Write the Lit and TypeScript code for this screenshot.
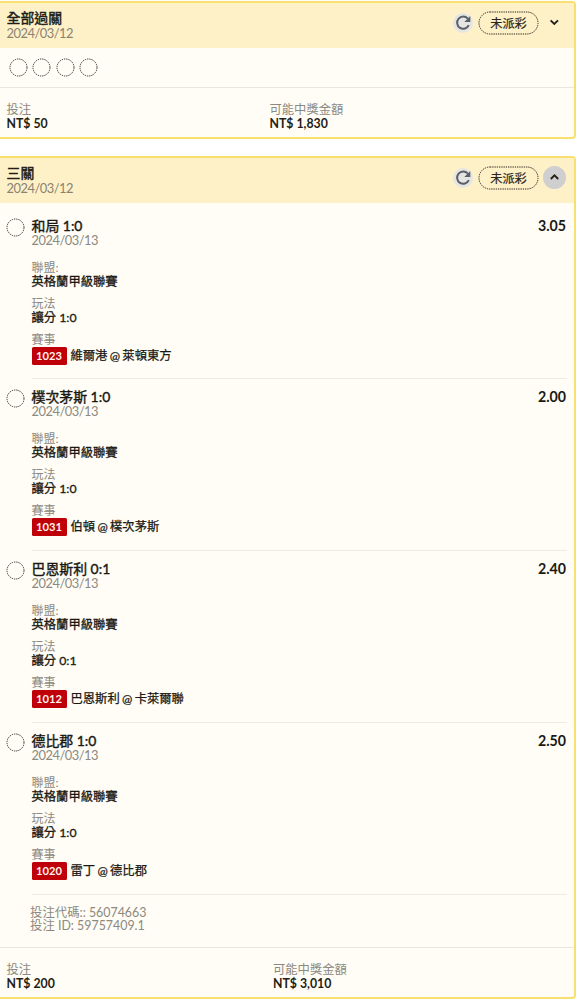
import { LitElement, html, css, svg } from "lit";
import { customElement, property } from "lit/decorators.js";

interface Leg {
  pick: string;
  odds: string;
  market: string;
  code: string;
  match: string;
}

const LEGS: Leg[] = [
  { pick: "和局 1:0", odds: "3.05", market: "讓分 1:0", code: "1023", match: "維爾港 @ 萊頓東方" },
  { pick: "樸次茅斯 1:0", odds: "2.00", market: "讓分 1:0", code: "1031", match: "伯頓 @ 樸次茅斯" },
  { pick: "巴恩斯利 0:1", odds: "2.40", market: "讓分 0:1", code: "1012", match: "巴恩斯利 @ 卡萊爾聯" },
  { pick: "德比郡 1:0", odds: "2.50", market: "讓分 1:0", code: "1020", match: "雷丁 @ 德比郡" },
];

const ring = html`<svg class="ring" width="19" height="19" viewBox="0 0 19 19">
  ${svg`<circle cx="9.5" cy="9.5" r="8.5" fill="none" stroke="#35332f" stroke-width="1" stroke-dasharray="1.35 0.9" />`}
</svg>`;

@customElement("bet-header")
class BetHeader extends LitElement {
  @property() heading = "";
  @property({ type: Boolean }) open = false;

  static styles = css`
    :host { display: flex; height: 44.5px; background: #fef1c8; }
    .titles { flex: 1; padding: 6.5px 0 0 6.5px; }
    .title { font-size: 13.9px; line-height: 16px; -webkit-text-stroke: 0.45px #201e18; color: #201e18; }
    .date { font-size: 12.9px; line-height: 14px; color: #8a8370; letter-spacing: -0.5px; }
    .actions { display: flex; align-items: center; height: 24px; margin: 7.5px 8px 0 0; }
    .refresh { width: 20px; height: 20px; border-radius: 50%; background: #e5e6e3; margin-right: 5px; }
    .status { display: grid; width: 61px; height: 24px; margin-right: 4px; }
    .status > * { grid-area: 1 / 1; }
    .label { font-size: 12.2px; line-height: 25px; text-align: center; color: #29251c; -webkit-text-stroke: 0.2px #29251c; }
    .toggle { width: 23px; height: 23px; border-radius: 50%; }
    .toggle.open { background: #d0cfcf; }
    svg { display: block; }
  `;

  render() {
    return html`
      <div class="titles">
        <div class="title">${this.heading}</div>
        <div class="date">2024/03/12</div>
      </div>
      <div class="actions">
        <div class="refresh">
          <svg width="20" height="20" viewBox="0 0 20 20">
            <path d="M15.8 12.2A6.1 6.1 0 1 1 14.8 5.6" fill="none" stroke="#5b6067" stroke-width="2" />
            <path d="M17.3 3V9H11.3Z" fill="#5b6067" />
          </svg>
        </div>
        <div class="status">
          <svg width="61" height="24" viewBox="0 0 61 24">
            <rect x="1" y="1" width="59" height="22" rx="11" fill="none" stroke="#302c20" stroke-width="1" stroke-dasharray="1.35 0.9" />
          </svg>
          <span class="label">未派彩</span>
        </div>
        <div class="toggle ${this.open ? "open" : ""}">
          <svg width="23" height="23" viewBox="0 0 23 23">
            <path d=${this.open ? "M7.8 13 11.5 9.4 15.2 13" : "M7.6 9.4 11.3 13 15 9.4"} fill="none" stroke="#25211a" stroke-width="1.9" />
          </svg>
        </div>
      </div>
    `;
  }
}

@customElement("bet-leg")
class BetLeg extends LitElement {
  @property({ attribute: false }) leg!: Leg;

  static styles = css`
    :host { display: flex; height: 171.9px; padding-left: 6px; box-sizing: border-box; }
    .ring { display: block; }
    .mark { width: 19px; margin: 10.5px 6.5px 0 0; }
    .body { flex: 1; box-sizing: border-box; padding-top: 10.5px; margin-right: 7px; border-bottom: 1px solid #eeebe4; }
    .top { display: flex; justify-content: space-between; font-size: 13.9px; line-height: 16px; -webkit-text-stroke: 0.4px #1a1813; color: #1a1813; padding-right: 1px; }
    .odds { font-size: 14.2px; font-weight: 700; -webkit-text-stroke: 0; }
    .date { font-size: 12.9px; line-height: 13px; color: #8b8982; letter-spacing: -0.5px; margin-bottom: 14px; }
    .label { font-size: 12px; line-height: 14px; color: #8b8982; }
    .value { font-size: 12.3px; line-height: 14px; -webkit-text-stroke: 0.3px #1a1813; color: #1a1813; margin-bottom: 8px; }
    .match { display: flex; align-items: center; height: 18px; font-size: 12.3px; color: #1a1813; gap: 4px; }
    .teams { -webkit-text-stroke: 0.25px #1a1813; line-height: 16px; word-spacing: -0.8px; }
    .code { width: 35px; height: 18px; border-radius: 1.5px; background: #c00009; color: #fff3ed; font-size: 11.2px; font-weight: 700; line-height: 18px; text-align: center; }
  `;

  render() {
    const { pick, odds, market, code, match } = this.leg;
    return html`
      <div class="mark">${ring}</div>
      <div class="body">
        <div class="top"><span>${pick}</span><span class="odds">${odds}</span></div>
        <div class="date">2024/03/13</div>
        <div class="label">聯盟:</div>
        <div class="value">英格蘭甲級聯賽</div>
        <div class="label">玩法</div>
        <div class="value">${market}</div>
        <div class="label">賽事</div>
        <div class="match"><span class="code">${code}</span><span class="teams">${match}</span></div>
      </div>
    `;
  }
}

@customElement("bet-footer")
class BetFooter extends LitElement {
  @property() stake = "";
  @property() payout = "";

  static styles = css`
    :host { display: grid; grid-template-columns: var(--split, 263px) 1fr; padding: 15px 0 0 6.5px; border-top: 1px solid #e9e6e0; flex: 1; }
    .label { font-size: 12.3px; line-height: 14px; color: #8b8982; }
    .amount { font-size: 12.3px; line-height: 13px; font-weight: 700; color: #1f1d17; }
  `;

  render() {
    return html`
      <div><div class="label">投注</div><div class="amount">${this.stake}</div></div>
      <div><div class="label">可能中獎金額</div><div class="amount">${this.payout}</div></div>
    `;
  }
}

@customElement("app-root")
class AppRoot extends LitElement {
  static styles = css`
    :host {
      display: block;
      height: 1000px;
      box-sizing: border-box;
      padding-top: 1px;
      overflow: hidden;
      background: #fff;
      font-family: Lato, "Noto Sans CJK TC", sans-serif;
    }
    .card { display: flex; flex-direction: column; box-sizing: border-box; width: 576px; border: 2px solid #f8e070; border-left: 0; border-radius: 0 4px 4px 0; background: #fffdf5; }
    .summary { height: 138px; margin-bottom: 17px; }
    .detail { height: 843px; }
    .detail bet-footer { --split: 266.5px; }
    .ring { display: block; }
    .rings { display: flex; gap: 4.4px; height: 39.5px; padding-left: 9px; align-items: center; }
    .legs { padding-top: 4.6px; }
    .ids { height: 52.2px; box-sizing: border-box; padding: 11.5px 0 0 30px; font-size: 12.4px; line-height: 13px; color: #8b8982; }
  `;

  render() {
    return html`
      <section class="card summary">
        <bet-header heading="全部過關"></bet-header>
        <div class="rings">${[0, 1, 2, 3].map(() => ring)}</div>
        <bet-footer stake="NT$ 50" payout="NT$ 1,830"></bet-footer>
      </section>
      <section class="card detail">
        <bet-header heading="三關" open></bet-header>
        <div class="legs">${LEGS.map((leg) => html`<bet-leg .leg=${leg}></bet-leg>`)}</div>
        <div class="ids">
          <div>投注代碼:: 56074663</div>
          <div>投注 ID: 59757409.1</div>
        </div>
        <bet-footer stake="NT$ 200" payout="NT$ 3,010"></bet-footer>
      </section>
    `;
  }
}
